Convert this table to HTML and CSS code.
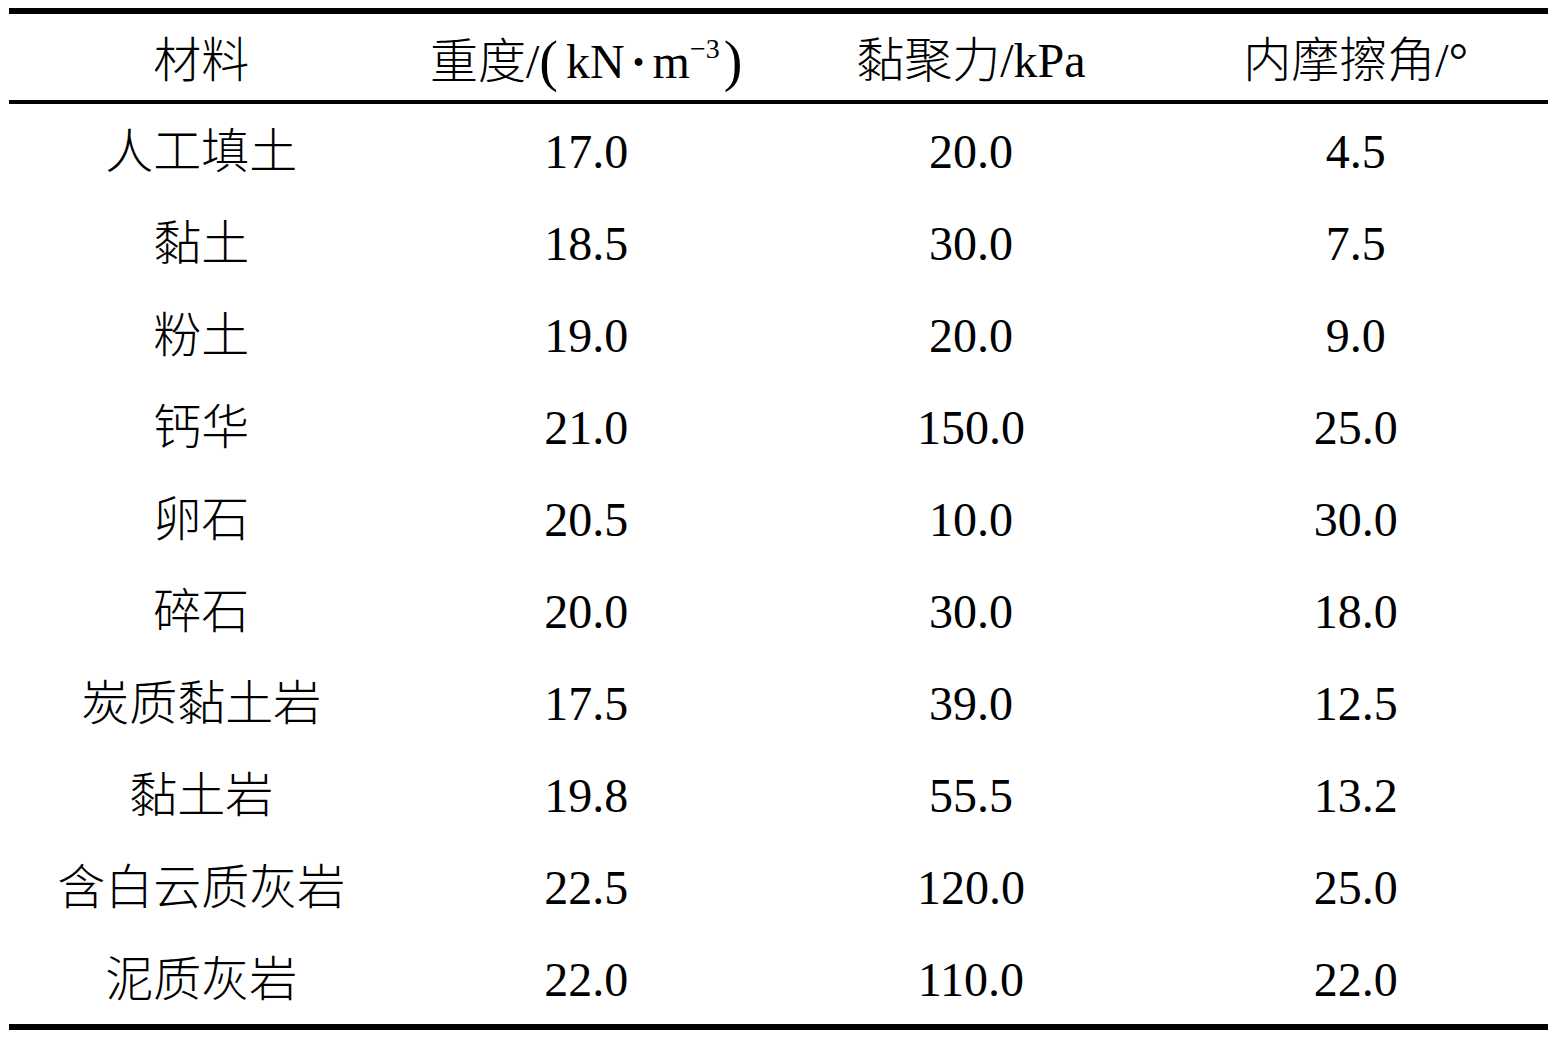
FILE: index.html
```html
<!DOCTYPE html>
<html>
<head>
    <meta charset="utf-8">
    <title>材料参数</title>
    <link rel="stylesheet" href="styles.css">
</head>
<body>
<table class="params">
    <thead>
    <tr>
        <th>材料</th>
        <th>重度/<span class="paren">(</span><span class="unit">kN<span class="dot">·</span>m<sup>−3</sup></span><span class="paren">)</span></th>
        <th>黏聚力/kPa</th>
        <th>内摩擦角/°</th>
    </tr>
    </thead>
    <tbody>
    <tr><td>人工填土</td><td>17.0</td><td>20.0</td><td>4.5</td></tr>
    <tr><td>黏土</td><td>18.5</td><td>30.0</td><td>7.5</td></tr>
    <tr><td>粉土</td><td>19.0</td><td>20.0</td><td>9.0</td></tr>
    <tr><td>钙华</td><td>21.0</td><td>150.0</td><td>25.0</td></tr>
    <tr><td>卵石</td><td>20.5</td><td>10.0</td><td>30.0</td></tr>
    <tr><td>碎石</td><td>20.0</td><td>30.0</td><td>18.0</td></tr>
    <tr><td>炭质黏土岩</td><td>17.5</td><td>39.0</td><td>12.5</td></tr>
    <tr><td>黏土岩</td><td>19.8</td><td>55.5</td><td>13.2</td></tr>
    <tr><td>含白云质灰岩</td><td>22.5</td><td>120.0</td><td>25.0</td></tr>
    <tr><td>泥质灰岩</td><td>22.0</td><td>110.0</td><td>22.0</td></tr>
    </tbody>
</table>
</body>
</html>
```
FILE: styles.css
```css
* {
    margin: 0;
    padding: 0;
}

body {
    background: #fff;
    color: #000;
    font-family: "Liberation Serif", "Noto Sans CJK SC", serif;
    font-weight: 300;
}

.params {
    width: 1539px;
    margin: 8px 0 0 9px;
    border-collapse: collapse;
    border-top: 6px solid #000;
    border-bottom: 6px solid #000;
    table-layout: fixed;
    font-size: 48px;
}

.params th,
.params td {
    text-align: center;
    vertical-align: middle;
    font-weight: 300;
    line-height: 1;
}

.params thead th {
    height: 91px;
    padding-top: 8px;
    box-sizing: border-box;
    border-bottom: 4px solid #000;
}

.params tbody td {
    height: 88px;
    padding-top: 4px;
}

.paren {
    font-size: 56px;
    vertical-align: -2px;
}

.unit {
    margin-left: 8px;
    margin-right: 4px;
}

.dot {
    margin: 0 6px;
    font-weight: 700;
}

.params sup {
    font-size: 28px;
    vertical-align: 20px;
    line-height: 0;
}
```
